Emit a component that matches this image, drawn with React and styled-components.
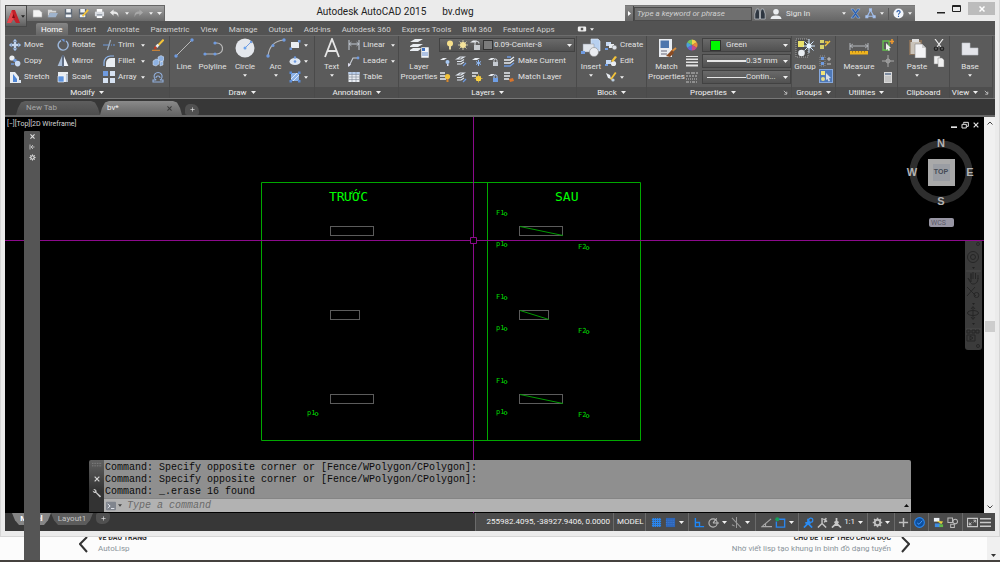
import React from "react";
import styled, { createGlobalStyle, ThemeProvider } from "styled-components";

const theme = {
  ui: `Roboto, "Open Sans", sans-serif`,
  mono: `"Liberation Mono", "DejaVu Sans Mono", monospace`,
  cad: `"DejaVu Sans Mono", "Liberation Mono", monospace`,
  text: "#e2e2e2",
  frame: "#ebebeb",
  panel: "#5b5b5b",
  dark: "#373737",
};

const GlobalStyle = createGlobalStyle`
  * { box-sizing: border-box; }
  body { margin: 0; background: #fcfcfc; }
  button, input, select {
    font: inherit;
    color: inherit;
    background: none;
    border: 0;
    padding: 0;
    margin: 0;
    outline: 0;
  }
  svg { display: block; flex: none; }
`;

const Screen = styled.div`
  position: relative;
  display: flex;
  flex-direction: column;
  min-height: 100vh;
  overflow: hidden;
  font: 8px/10px ${({ theme }) => theme.ui};
  color: ${({ theme }) => theme.text};
`;

const Window = styled.main`
  flex: 1;
  display: flex;
  flex-direction: column;
  position: relative;
  padding: 0 5px 5px;
  background: ${({ theme }) => theme.frame};
  border-bottom: 1px solid #d6d6d6;
  box-shadow: inset 1px 0 #d6d6d6, inset -1px 0 #d6d6d6;
`;

/* title bar */

const TitleBar = styled.header`
  display: flex;
  height: 21px;
  padding-top: 5px;
`;

const AppButton = styled.button`
  position: absolute;
  z-index: 2;
  left: 5px;
  top: 5px;
  width: 22px;
  height: 22px;
  display: flex;
  align-items: center;
  justify-content: space-around;
  background: linear-gradient(#b5b5b5, #5e5e5e);
  border: 1px solid #484848;
`;

const QuickAccess = styled.div`
  display: flex;
  align-items: center;
  justify-content: space-between;
  width: 160px;
  padding: 0 2px 0 26px;
  background: linear-gradient(#a2a2a2, #6b6b6b);
  border: 1px solid #666;
  border-bottom: 0;
`;

const Title = styled.h1`
  flex: 1;
  display: flex;
  justify-content: center;
  gap: 16px;
  margin: 0;
  font-size: 10px;
  font-weight: 400;
  line-height: 14px;
  color: #222;
`;

const InfoCenter = styled.div`
  display: flex;
  align-items: center;
  width: 290px;
  background: linear-gradient(#858585, #666);
  border-top: 1px solid #777;
`;

const InfoArrow = styled.button`
  width: 9px;
  height: 100%;
  display: flex;
  align-items: center;
  justify-content: center;
  border-right: 1px solid #444;
`;

const Search = styled.input`
  width: 118px;
  height: 14px;
  padding-left: 2px;
  background: #6f6f6f;
  border: 1px solid #4a4a4a;
  font-style: italic;
  &::placeholder { color: #cfcfcf; opacity: 1; }
`;

const InfoItems = styled.div`
  flex: 1;
  display: flex;
  align-items: center;
  gap: 4px;
  padding: 0 3px 0 2px;
`;

const SignIn = styled.button`
  flex: 1;
  display: flex;
  align-items: center;
  justify-content: space-between;
`;

const Divider = styled.span`
  width: 1px;
  height: 12px;
  background: #5a5a5a;
`;

const Caption = styled.div`
  display: flex;
  gap: 7px;
  width: 80px;
  margin-top: -3px;
  padding-left: 22px;
`;

const CaptionButton = styled.button`
  display: flex;
  align-items: center;
  justify-content: center;
  width: ${({ $close }) => ($close ? 30 : 9)}px;
  height: 13px;
  background: ${({ $close }) => ($close ? "#bcbcbc" : "none")};
`;

/* ribbon */

const RibbonTabs = styled.nav`
  display: flex;
  align-items: flex-end;
  height: 14px;
  padding-left: 31px;
  background: #535353;
`;

const RibbonTab = styled.button`
  height: 12px;
  padding: 0 5px 0 ${({ $active }) => ($active ? 5 : 6)}px;
  margin-right: ${({ $active }) => ($active ? 2 : 0)}px;
  line-height: 11px;
  white-space: nowrap;
  color: ${({ $active }) => ($active ? "#fff" : "#d0d0d0")};
  background: ${({ $active }) => ($active ? "linear-gradient(#858585, #666)" : "none")};
  border-radius: 2px 2px 0 0;
`;

const TabExtra = styled.button`
  display: flex;
  align-items: center;
  gap: 3px;
  height: 12px;
  padding-left: 17px;
`;

const Ribbon = styled.section`
  display: flex;
  height: 64px;
  background: ${({ theme }) => theme.panel};
  border-top: 1px solid #6c6c6c;
  border-bottom: 1px solid #777;
`;

const PanelBox = styled.section`
  display: flex;
  flex-direction: column;
  width: ${({ $w }) => $w}px;
  border-right: 1px solid #4a4a4a;
`;

const PanelBody = styled.div`
  flex: 1;
  display: flex;
  align-items: flex-start;
  gap: ${({ $gap }) => $gap || 0}px;
  padding: 1px 0 0 ${({ $pad }) => $pad}px;
`;

const PanelTitle = styled.button`
  display: flex;
  align-items: center;
  justify-content: center;
  gap: 4px;
  height: 11px;
  color: #f0f0f0;
  background: #4e4e4e;
`;

const Launcher = styled.span`
  margin-left: auto;
  padding-right: 3px;
`;

const TitleText = styled.span`
  display: flex;
  align-items: center;
  gap: 4px;
  margin-left: ${({ $launcher }) => ($launcher ? "auto" : 0)};
`;

const Column = styled.div`
  display: flex;
  flex-direction: column;
  width: ${({ $w }) => ($w ? `${$w}px` : "auto")};
`;

const Line = styled.div`
  display: flex;
  align-items: center;
  gap: 4px;
  height: 16px;
`;

const Tool = styled.button`
  display: flex;
  align-items: center;
  gap: 3px;
  height: 16px;
  white-space: nowrap;
`;

const ToolText = styled.span`
  flex: ${({ $w }) => ($w ? "none" : "auto")};
  width: ${({ $w }) => ($w ? `${$w}px` : "auto")};
  text-align: left;
`;

const Toggle = styled(Tool)`
  justify-content: center;
  width: 14px;
  height: 14px;
  background: #4f79b8;
  border: 1px solid #86a8dd;
`;

const BigTool = styled.button`
  display: flex;
  flex-direction: column;
  align-items: center;
  width: ${({ $w }) => $w}px;
  padding-top: 1px;
`;

const BigLabel = styled.span`
  margin: 4px 0 2px;
  white-space: pre;
  line-height: 10px;
`;

const Combo = styled.label`
  display: flex;
  align-items: center;
  gap: ${({ $gap }) => $gap || 0}px;
  width: ${({ $w }) => $w}px;
  height: 14px;
  padding: 0 2px 0 ${({ $pad }) => $pad || 4}px;
  background: linear-gradient(#6a6a6a, #515151);
  border: 1px solid #424242;
`;

const Select = styled.select`
  flex: 1;
  min-width: 0;
  appearance: none;
  line-height: 10px;
  text-overflow: ellipsis;
`;

const Swatch = styled.span`
  width: ${({ $size }) => $size}px;
  height: ${({ $size }) => $size}px;
  background: ${({ $color }) => $color};
  border: 1px solid #333;
`;

const Rule = styled.span`
  width: 39px;
  height: ${({ $h }) => $h}px;
  background: #e6e6e6;
`;

/* file tabs */

const FileTabs = styled.nav`
  display: flex;
  align-items: flex-end;
  height: 18px;
  padding-left: 11px;
  background: ${({ theme }) => theme.dark};
  border-bottom: 2px solid #666;
`;

const FileTab = styled.button`
  display: flex;
  align-items: center;
  justify-content: space-between;
  width: ${({ $w }) => $w}px;
  height: 14px;
  padding: 0 9px 0 ${({ $active }) => ($active ? 7 : 10)}px;
  color: ${({ $active }) => ($active ? "#f4f4f4" : "#a8a8a8")};
  background: ${({ $active }) =>
    $active ? "linear-gradient(#8a8a8a, #666)" : "linear-gradient(#5e5e5e, #4c4c4c)"};
  clip-path: polygon(0 100%, 2px 50%, 5px 10%, 9px 0, calc(100% - 9px) 0, calc(100% - 5px) 10%, calc(100% - 2px) 50%, 100% 100%);
`;

const CloseMark = styled.span`
  color: #3c3c3c;
`;

const AddTab = styled.button`
  display: flex;
  align-items: center;
  justify-content: center;
  width: 14px;
  height: 11px;
  margin-left: 3px;
  background: #505050;
  border-radius: ${({ $bottom }) => ($bottom ? "2px 2px 7px 5px" : "5px 7px 2px 2px")};
`;

/* drawing area */

const Workspace = styled.section`
  flex: 1;
  display: flex;
`;

const Canvas = styled.div`
  flex: 1;
  position: relative;
  overflow: hidden;
  background: #000;
`;

const Model = styled.svg`
  position: absolute;
  inset: 0;
  width: 100%;
  height: 100%;
  font-family: ${({ theme }) => theme.cad};
`;

const ViewLabel = styled.div`
  position: relative;
  padding: 3px 2px;
  font-size: 7px;
  line-height: 8px;
  color: #d8d8d8;
`;

const DocButtons = styled.div`
  position: absolute;
  top: 4px;
  right: 4px;
  display: flex;
  gap: 3px;
`;

const Compass = styled.svg`
  position: absolute;
  top: 18px;
  right: 6px;
`;

const Wcs = styled.button`
  position: absolute;
  top: 101px;
  right: 30px;
  width: 25px;
  height: 9px;
  padding-left: 2px;
  font-size: 7px;
  line-height: 8px;
  text-align: left;
  color: #5a5865;
  background: #9896a4;
  border-radius: 2px;
`;

const NavBar = styled.div`
  position: absolute;
  top: 124px;
  right: 2px;
  width: 17px;
  height: 109px;
  background: #3b3b3b;
  border-radius: 0 0 3px 3px;
`;

const Scrollbar = styled.div`
  display: flex;
  flex-direction: column;
  align-items: center;
  justify-content: space-between;
  width: 11px;
  padding: 4px 0;
  background: #f0f0f0;
`;

const Thumb = styled.span`
  width: 10px;
  height: 11px;
  margin-top: 22px;
  background: #cdcdcd;
`;

const Command = styled.section`
  position: absolute;
  left: 84px;
  right: 73px;
  bottom: 1px;
  display: flex;
  border-radius: 2px 2px 0 0;
  overflow: hidden;
  font: 10px/12px ${({ theme }) => theme.mono};
  color: #0a0a0a;
`;

const CommandGrip = styled.div`
  display: flex;
  flex-direction: column;
  align-items: center;
  gap: 5px;
  width: 15px;
  color: #d4d4d4;
  background: linear-gradient(#606060, #333 60%);
`;

const CommandMain = styled.div`
  flex: 1;
`;

const History = styled.div`
  padding: 2px 0 0 1px;
  background: #8f8f8f;
  white-space: nowrap;
`;

const CommandRow = styled.label`
  display: flex;
  align-items: center;
  gap: 2px;
  height: 14px;
  padding: 0 2px;
  background: #b2b2b2;
  border-top: 1px solid #858585;
`;

const CommandInput = styled.input`
  flex: 1;
  margin-left: 3px;
  font-style: italic;
  &::placeholder { color: #6a6a6a; opacity: 1; }
`;

/* status bar */

const StatusBar = styled.footer`
  display: flex;
  height: 18px;
  background: ${({ theme }) => theme.dark};
`;

const LayoutTabs = styled.nav`
  flex: 1;
  display: flex;
  padding-left: 7px;
`;

const LayoutTab = styled.button`
  width: ${({ $w }) => $w}px;
  height: 12px;
  font-weight: ${({ $active }) => ($active ? 700 : 400)};
  color: ${({ $active }) => ($active ? "#fff" : "#c4c4c4")};
  background: ${({ $active }) => ($active ? "#858585" : "#5c5c5c")};
  clip-path: polygon(0 0, 100% 0, calc(100% - 3px) 60%, calc(100% - 7px) 100%, 7px 100%, 3px 60%);
`;

const StatusGroup = styled.div`
  display: flex;
  align-items: center;
  justify-content: ${({ $end }) => ($end ? "flex-end" : "space-around")};
  width: ${({ $w }) => $w}px;
  padding: 0 3px;
  color: #f2f2f2;
  white-space: nowrap;
  background: #4b4b4b;
  border-left: 1px solid #6a6a6a;
`;

const IconButton = styled.button`
  display: flex;
  color: ${({ $muted }) => ($muted ? "#c0c0c0" : "inherit")};
`;

/* page behind the window */

const PageStrip = styled.footer`
  display: flex;
  height: 25px;
  overflow: hidden;
  background: #fcfcfc;
  border-bottom: 2px solid #45423f;
`;

const Pager = styled.div`
  flex: 1;
  display: flex;
  justify-content: space-between;
  padding: 0 77px 0 79px;
`;

const PagerLink = styled.a`
  display: flex;
  gap: 10px;
  text-align: ${({ $right }) => ($right ? "right" : "left")};
  text-decoration: none;
  color: #8a949b;
`;

const PagerText = styled.span`
  display: flex;
  flex-direction: column;
  margin-top: -4px;
  line-height: 11px;
`;

const PagerTitle = styled.strong`
  font-size: 7px;
  line-height: 10px;
  color: #333;
`;

const PageScroll = styled.div`
  display: flex;
  align-items: flex-end;
  justify-content: center;
  width: 13px;
  padding-bottom: 3px;
  background: #f0f0f0;
`;

const Palette = styled.aside`
  position: absolute;
  z-index: 3;
  left: 24px;
  top: 131px;
  bottom: 2px;
  width: 16px;
  display: flex;
  flex-direction: column;
  align-items: center;
  gap: 4px;
  padding-top: 2px;
  background: #555;
  border-radius: 1px 1px 0 0;
`;

/* icons */

const B = "#6f9be0";
const W = "#e9edf2";
const Y = "#f3c33a";

const small = {
  move: (
    <g fill="#b9d0ee" stroke="#7da7e0" strokeWidth=".4">
      <path d="M6 0l2 2.6H4zM6 12l2-2.6H4zM0 6l2.6-2v4zM12 6L9.4 4v4z" />
      <path d="M5 3h2v6H5zM3 5h6v2H3z" fill={W} />
    </g>
  ),
  rotate: (
    <g fill="none">
      <path d="M4 1.6A5 5 0 1 0 9 2" stroke="#9db9de" strokeWidth="1.4" />
      <path d="M4 .2h3.5v3z" fill={B} />
    </g>
  ),
  trim: (
    <g fill="none">
      <path d="M0 6h12" stroke={B} strokeWidth="1.2" strokeDasharray="7 1 1 1" />
      <path d="M7.5 1L4.5 11" stroke="#9ab" strokeWidth="1.2" />
    </g>
  ),
  erase: (
    <g>
      <path d="M11.6.6L6 6.5" stroke={Y} strokeWidth="2" />
      <path d="M6.4 5.6L4 8.4" stroke={W} strokeWidth="2.4" />
      <path d="M4.2 7.6L2.4 10" stroke="#c23b22" strokeWidth="2.2" />
      <path d="M0 11.3h8" stroke="#e08c30" />
    </g>
  ),
  copy: (
    <g>
      <circle cx="3" cy="3" r="2.6" fill={W} />
      <circle cx="6" cy="5.5" r="1.8" fill={B} />
      <circle cx="8.6" cy="8.6" r="2.8" fill="#c9daf2" />
      <path d="M2 9h3" stroke={B} strokeWidth="1.4" />
    </g>
  ),
  mirror: (
    <g>
      <path d="M5 1v10H.6z" fill="#a9bdd8" />
      <path d="M7 1v10h4.4z" fill="#f0f4fa" />
      <path d="M6 0v12" stroke={B} strokeWidth=".6" />
    </g>
  ),
  fillet: (
    <g>
      <path d="M3 12V8a5 5 0 0 1 5-5h4v9z" fill={W} />
      <path d="M1 11V7.5A6.5 6.5 0 0 1 7.5 1H11" fill="none" stroke="#8db4ea" strokeWidth="1.2" />
    </g>
  ),
  explode: (
    <g fill="#8fb2e2" stroke="#dbe7f7" strokeWidth=".5">
      <path d="M1 6l3-2 3 1v4l-3 2-3-1z" />
      <path d="M6 2l3-1.5L12 2v3L9 7 6 5zM8 7l3-1v4l-3 1z" />
    </g>
  ),
  stretch: (
    <g>
      <path d="M1 1h5l4 5v6H1z" fill={W} />
      <path d="M4 11V3l4 5v3z" fill="#4f86d6" />
      <path d="M9 9h3v3H9z" fill="#dce6f3" />
    </g>
  ),
  scale: (
    <g>
      <path d="M1 1h10v2.500H9V11H1z" fill={W} />
      <path d="M1 5h6v6H1z" fill="#5d93de" stroke="#fff" strokeWidth=".6" />
      <path d="M9 3.500h2V11H9z" fill="#b9c6d8" />
    </g>
  ),
  array: (
    <g>
      <path d="M0 0h5v5H0z" fill={B} />
      <path d="M7 0h5v5H7zM0 7h5v5H0zM7 7h5v5H7z" fill="#d7e3f3" />
    </g>
  ),
  offset: (
    <g fill="none" stroke="#92b0dd" strokeWidth="1.1">
      <path d="M1 11V9h3.2A4 4 0 1 1 8 9h3v2z" />
      <path d="M4 7a2 2 0 1 1 4 0" />
    </g>
  ),
  rect: (
    <g>
      <path d="M2 3h8v6H2z" fill={W} />
      <path d="M9 1h2.5v2.5H9zM.5 8.5H3V11H.5z" fill={B} />
    </g>
  ),
  ellipse: (
    <g>
      <ellipse cx="6" cy="6.5" rx="5.5" ry="3.6" fill="#dfe8f4" />
      <circle cx="6" cy="6.5" r="1.3" fill={B} />
      <circle cx="6" cy="2.5" r="1.2" fill={B} />
    </g>
  ),
  hatch: (
    <g>
      <path d="M2 2h8v8H2z" fill="#8db2e6" />
      <path d="M2 8l6-6M4 10l6-6" stroke="#dbe7f7" />
      <path d="M.5.5h2.5v2.5H.5zM9 .5h2.5v2.5H9zM.5 9h2.5v2.5H.5zM9 9h2.5v2.5H9z" fill="#5d8cd4" />
    </g>
  ),
  linear: (
    <g stroke="#c4ccd6" fill="none">
      <path d="M1 1v10M11 1v10M1 5h10" />
      <path d="M3.500 3L1 5l2.500 2M8.500 3L11 5 8.500 7" strokeWidth=".7" />
    </g>
  ),
  leader: (
    <g fill="none">
      <path d="M1 11l4-8h6" stroke="#c9ced6" strokeWidth="1.100" />
      <path d="M0 12V8l3 1.500z" fill="#dde" />
      <circle cx="10" cy="3" r="1.400" fill={B} />
    </g>
  ),
  table: (
    <g>
      <path d="M.5 1h11v10H.5z" fill={W} />
      <path d="M.5 1h11v2.500H.5z" fill="#b7cdec" />
      <path d="M.5 3.500h11M.5 6h11M.5 8.500h11M4 1v10M8 1v10" stroke="#7d8793" strokeWidth=".6" />
    </g>
  ),
  bulb: (
    <g>
      <circle cx="6" cy="4.500" r="3" fill="#f7e08a" />
      <path d="M5 7h2v3.500H5z" fill="#e5d9a4" />
    </g>
  ),
  sun: (
    <g>
      <path d="M6 1v10M1 6h10M2.500 2.500l7 7M9.500 2.500l-7 7" stroke="#c9c4a0" />
      <circle cx="6" cy="6" r="3" fill="#f5e39a" />
    </g>
  ),
  unlock: (
    <g>
      <path d="M0 3.500l3-2h4l-2 2z" fill={W} />
      <path d="M5 6V4.500a2 2 0 0 1 4 0" fill="none" stroke="#d4d8dc" strokeWidth="1.100" />
      <path d="M4 6h6v5H4z" fill="#c8ccd0" />
    </g>
  ),
  sheet: (
    <g>
      <path d="M1 5l3-2h4l-3 2z" fill={W} />
      <circle cx="8.500" cy="7" r="2" fill="#a8c8f2" />
      <path d="M8 9h1.500v2H8z" fill="#dde" />
    </g>
  ),
  sheets: (
    <g stroke="#dfe6ef" strokeWidth="1.200" fill="none">
      <path d="M2 4l3-2h4L6 4zM2 6.500h4l3-2M2 9h4l3-2" />
      <path d="M8 11l3-3" stroke={B} />
    </g>
  ),
  freeze: (
    <g>
      <path d="M1 5l3-2h5L6 5z" fill={W} />
      <path d="M7.500 5v6M5 6.500l5 3M10 6.500l-5 3" stroke="#8fb9f5" />
    </g>
  ),
  lock: (
    <g>
      <path d="M1 5l3-2h4L5 5z" fill={W} />
      <path d="M6 7h5v4H6z" fill="#c6cbd2" />
      <path d="M7 7V5.500a1.500 1.500 0 0 1 3 0V7" fill="none" stroke="#d8dce2" />
    </g>
  ),
  lockBlue: (
    <g>
      <path d="M1 5l3-2h4L5 5z" fill={W} />
      <path d="M6 7h5v4H6z" fill="#6f9fe6" />
      <path d="M7 7V5.500a1.500 1.500 0 0 1 3 0V7" fill="none" stroke="#b7cff2" />
    </g>
  ),
  makeCurrent: (
    <g strokeWidth="1.300" fill="none">
      <path d="M1 5h6l4-3M1 8h6l4-3" stroke={W} />
      <path d="M1 11h6l4-3M4 2h4" stroke={B} />
    </g>
  ),
  layerSun: (
    <g>
      <path d="M1 2h5M1 5h5M1 8h6" stroke={W} strokeWidth="1.500" />
      <circle cx="8.500" cy="5.500" r="2.600" fill={Y} />
      <path d="M7.500 8h2v3h-2z" fill="#d6882e" />
    </g>
  ),
  thaw: (
    <g>
      <path d="M1 2h6M1 5h4" stroke={W} strokeWidth="1.500" />
      <circle cx="7.500" cy="7.500" r="2.600" fill="#ffe04d" />
      <path d="M7.500 3.500v8M3.500 7.500h8M5 5l5 5M10 5l-5 5" stroke={Y} strokeWidth=".7" />
    </g>
  ),
  matchLayer: (
    <g>
      <path d="M1 2h6M1 5h6M1 8h5" stroke={W} strokeWidth="1.500" />
      <path d="M6 8l4-1 1 3-4 1z" fill="#d9752c" />
    </g>
  ),
  create: (
    <g>
      <path d="M1 3h5v4H1z" fill="#c5d8f3" />
      <path d="M4 5h5v4H4z" fill={W} />
      <circle cx="9.500" cy="8.500" r="2.300" fill="#dfe3ea" stroke="#777" strokeWidth=".5" />
      <path d="M0 9h3v2H0z" fill={B} />
    </g>
  ),
  edit: (
    <g>
      <path d="M1 5h5v4H1z" fill="#c5d8f3" />
      <circle cx="8.500" cy="8.500" r="2.600" fill={W} />
      <path d="M6 6l4-5 2 1-4 5z" fill={Y} />
      <path d="M0 9h3v2H0z" fill={B} />
    </g>
  ),
  attr: (
    <g>
      <path d="M1 2l4 2 1 4-3-1z" fill={W} />
      <path d="M5 8l5-7 1.500 1-5 7z" fill={Y} />
      <circle cx="8" cy="9" r="1.600" fill="#bcd" />
    </g>
  ),
  wheel: (
    <g>
      <path d="M6 6V.5A5.500 5.500 0 0 1 10.800 3.300z" fill="#f2d14a" />
      <path d="M6 6l4.800-2.700a5.500 5.500 0 0 1 0 5.400z" fill="#e98a3a" />
      <path d="M6 6l4.800 2.700A5.500 5.500 0 0 1 6 11.500z" fill="#c74a8a" />
      <path d="M6 6v5.500a5.500 5.500 0 0 1-4.800-2.800z" fill="#6a62d2" />
      <path d="M6 6L1.200 8.700a5.500 5.500 0 0 1 0-5.400z" fill="#4aa3d8" />
      <path d="M6 6L1.200 3.300A5.500 5.500 0 0 1 6 .5z" fill="#76c45a" />
    </g>
  ),
  weights: (
    <g fill="#e4e4e4">
      <path d="M0 1h12v1H0zM0 3.500h12V5H0zM0 6.500h12v1.500H0zM0 9.500h12v2H0z" />
    </g>
  ),
  types: (
    <g stroke="#cfcfcf" strokeWidth=".9">
      <path d="M0 2h12" strokeDasharray="4 1" />
      <path d="M0 5h12" strokeDasharray="2 1" />
      <path d="M0 8h12" strokeDasharray="1 1" />
      <path d="M0 11h12" strokeDasharray="3 1 1 1" />
    </g>
  ),
  ungroup: (
    <g>
      <path d="M1 1h4v3H1zM1 6h4v4H1z" fill="#d9d26a" />
      <path d="M6 3h3M6 7l5-5" stroke={Y} strokeWidth="1.400" />
    </g>
  ),
  groupEdit: (
    <g>
      <path d="M1 1h5v10H1z" fill="none" stroke="#aaa" strokeWidth=".7" strokeDasharray="1 1" />
      <path d="M2 2h3v3H2zM2 7h3v3H2z" fill={B} />
      <path d="M8 4h4M10 2v4M8 9h4" stroke="#ddd" strokeWidth=".8" />
    </g>
  ),
  groupSel: (
    <g>
      <path d="M1 1h4v4H1z" fill="#f0e37a" />
      <circle cx="3" cy="9" r="2" fill="#e6dd8a" />
      <path d="M6 3l5 5-2 .3 1 2.700-1.500.5-1-2.500L6 10z" fill="#d5dde8" />
    </g>
  ),
  select: (
    <g>
      <path d="M1 2h6v9H1z" fill="none" stroke="#63c04c" strokeWidth="1.400" />
      <path d="M4 4l5 5-2 .2 1 2-1.500.6L5.500 10 4 11z" fill="#eee" />
      <path d="M10 0v5M7.500 2.500h5" stroke="#f09a30" strokeWidth="1.500" />
    </g>
  ),
  point: <path d="M6 0v12M0 6h12M4 6a2 2 0 1 0 4 0 2 2 0 1 0-4 0" stroke="#a9a9a9" fill="none" strokeWidth="1" />,
  calc: (
    <g>
      <path d="M2 1h8v11H2z" fill="#d8d8d8" />
      <path d="M3 2h6v2H3z" fill="#7d8ba0" />
      <path d="M3.500 6h5M3.500 8h5M3.500 10h5" stroke="#888" strokeDasharray="1 1" />
    </g>
  ),
  cut: (
    <g fill="none">
      <path d="M2 0l6 8M10 0L4 8" stroke="#ececec" strokeWidth="1.200" />
      <circle cx="3" cy="9.700" r="1.700" stroke="#222" strokeWidth="1.200" />
      <circle cx="9" cy="9.700" r="1.700" stroke="#222" strokeWidth="1.200" />
    </g>
  ),
  copyclip: (
    <g fill="#f0f0f0" stroke="#8a8a8a" strokeWidth=".5">
      <path d="M1 1h6v8H1z" />
      <path d="M5 3h4l2 2v7H5z" />
    </g>
  ),
  newFile: <path d="M1 2h7l3 3v5H1z" fill="#f4f4f4" stroke="#888" strokeWidth=".5" />,
  open: (
    <g>
      <path d="M1 2h4l1 1h4v2H3L1 10z" fill="#d8d8d8" />
      <path d="M3 5.500h9L9.500 10H1z" fill="#9fb3cc" />
    </g>
  ),
  save: (
    <g>
      <path d="M2 1h8v10H2z" fill="#5b6674" />
      <path d="M3.500 1h5v4h-5zM3 7h6v3H3z" fill="#eef1f5" />
    </g>
  ),
  saveAs: (
    <g>
      <path d="M1 1h8v10H1z" fill="#5b6674" />
      <path d="M2.500 1h5v4h-5zM2 7h6v3H2z" fill="#eef1f5" />
      <path d="M5 9l6-7" stroke={Y} strokeWidth="2" />
    </g>
  ),
  print: (
    <g>
      <path d="M3 1h6v4H3zM3 8h6v3H3z" fill="#fff" />
      <path d="M1 4h10v5H1z" fill="#dadde2" />
      <path d="M3 7.500h6" stroke="#6b7785" />
    </g>
  ),
  undo: <path d="M5 1.500L1 5l4 3.500V6.300c3-.3 4.500.7 5 3.700C11 5.500 9 3.700 5 3.700z" fill="#e9e9e9" />,
  redo: <path d="M7 1.500L11 5 7 8.500V6.300C4 6 2.500 7 2 10 1 5.500 3 3.700 7 3.700z" fill="#a9a9a9" />,
  binoculars: (
    <g fill="#2e3640" stroke="#d8dde3" strokeWidth=".6">
      <path d="M2.500 1h2.200l.8 3v7H.8V6zM7.300 1h2.200l1.700 5v5H6.500V4z" />
    </g>
  ),
  user: (
    <g fill="#eceff2">
      <circle cx="6" cy="3.800" r="2.800" />
      <path d="M.5 11c.5-3 2.500-3.500 5.500-3.500s5 .5 5.500 3.500z" />
    </g>
  ),
  exchange: (
    <g>
      <path d="M1 1l4 5-4 5h3l2-3 2 3h3L7 6l4-5H8L6 4 4 1z" fill="#2b5fae" stroke="#b9d0f3" strokeWidth=".5" />
    </g>
  ),
  a360: (
    <g fill="none" stroke="#9fbbe8" strokeWidth="1.300">
      <path d="M6 2.500L2.500 9h7z" />
      <path d="M5 1h2v2H5zM1 8.500h2v2H1zM9 8.500h2v2H9z" fill="#dce8fa" />
    </g>
  ),
  helpDisc: (
    <g>
      <circle cx="6" cy="6" r="5.500" fill="#f3f6fb" />
      <path d="M4.300 4.700c0-2.600 3.500-2.300 3.500-.3C7.800 5.700 6 5.500 6 7.300M6 8.500v1.200" fill="none" stroke="#2a5cab" strokeWidth="1.200" />
    </g>
  ),
  camera: (
    <g>
      <rect x="1" y="3" width="10" height="6" rx="1.500" fill="#efefef" />
      <path d="M4.500 4.500h3v3h-3z" fill="#555" />
    </g>
  ),
  close: <path d="M2.500 2.500l7 7M9.500 2.500l-7 7" stroke="currentColor" strokeWidth="1.800" />,
  plus: <path d="M6 1v10M1 6h10" stroke="currentColor" strokeWidth="1.600" />,
  min: <path d="M1.500 8h9v2.500h-9z" fill="currentColor" />,
  restore: <path d="M4 2h7v6H9M4 2v2M1.500 5h6.500v5.500H1.500z" stroke="currentColor" strokeWidth="1.500" fill="none" />,
  wrench: (
    <path d="M1.500 1.500a3 3 0 0 1 4 3.500l5.500 5-1.500 1.500-5-5.500A3 3 0 0 1 .8 3L3 4.500 4 3.500z" fill="#c9c9c9" />
  ),
  prompt: (
    <g>
      <rect x="0" y="1" width="12" height="10" rx="1" fill="#80858e" />
      <path d="M2 3.500L5 6 2 8.500M6 9h4" stroke="#e9edf5" fill="none" strokeWidth="1.100" />
    </g>
  ),
  grip: <path d="M0 4h12M0 7h12" stroke="#909090" strokeDasharray="1 1" />,
  pin: <path d="M2 1v10M5 6h6M8 2L4 6l4 4" stroke="#d5d5d5" fill="none" strokeWidth="1.600" />,
  gear: (
    <g>
      <circle cx="6" cy="6" r="3" fill="none" stroke="currentColor" strokeWidth="2" />
      <path d="M6 .8v2M6 9.200v2M.8 6h2M9.200 6h2M2.300 2.300l1.500 1.500M8.200 8.200l1.500 1.500M9.700 2.300L8.200 3.800M3.800 8.200L2.300 9.700" stroke="currentColor" strokeWidth="1.700" />
    </g>
  ),
  grid: <path d="M2.500 1v10M4.800 1v10M7.200 1v10M9.500 1v10M1 2.500h10M1 4.800h10M1 7.200h10M1 9.500h10" stroke="#2a86ee" strokeWidth="1.300" />,
  snap: (
    <g>
      <path d="M1 1h10v10H1z" fill="#2e64b4" />
      <path d="M1 3.500h10M1 6h10M1 8.500h10" stroke="#3f7fdb" strokeDasharray="1 1" />
    </g>
  ),
  ortho: <path d="M1.500 1v9.500H11M1.500 6H6v4.500" stroke="#1f86f5" strokeWidth="1.500" fill="none" />,
  polar: (
    <g fill="none" stroke="#b9b9b9" strokeWidth="1.200">
      <circle cx="5.500" cy="6.500" r="4.500" />
      <path d="M5.500 6.500H12M5.500 6.500l4-5" />
    </g>
  ),
  iso: <path d="M1 1l10 10.500M6 0v12M1 8.500l3 1.500" stroke="#999" strokeWidth="1.100" />,
  track: <path d="M11 2L1 10.500h11M5 7v3" stroke="#aaa" strokeWidth="1.200" fill="none" />,
  osnap: (
    <g>
      <path d="M4 2.500h6.500V11h-9V5" fill="none" stroke="#2a86ee" strokeWidth="1.500" />
      <circle cx="2.500" cy="2.500" r="2.200" fill="#17a05c" />
    </g>
  ),
  annoBlue: (
    <g stroke="#2a8cf5" fill="none">
      <path d="M5.500 2v5L1 11.500M5.500 7L10 11.500M2.500 6.500h6" strokeWidth="1.900" />
      <circle cx="8.500" cy="3.500" r="2.200" strokeWidth="1.300" />
    </g>
  ),
  annoStar: <path d="M5.500 1v6L1 11.500M5.500 7L10 11.500M7 2l4 3M10 1L8 6" stroke="#c2c2c2" strokeWidth="1.600" fill="none" />,
  anno: <path d="M6 1v6L1 11.500M6 7l5 4.500M4 5l2 3 2-3" stroke="#c8c8c8" strokeWidth="1.900" fill="none" />,
  hardware: (
    <g>
      <circle cx="6" cy="6" r="5.300" fill="#0d4f9e" stroke="#2a86ee" strokeWidth="1.200" />
      <path d="M3.500 6.500L5.500 8 9 4" stroke="#4ba0ff" fill="none" />
    </g>
  ),
  isolate: (
    <g>
      <path d="M1 1h6v4H1z" fill="#eef3f8" />
      <path d="M4 4l7 1-2 3z" fill="#e9d23b" />
      <path d="M2 7h6v4H2z" fill="#3f8ce2" />
      <path d="M7 8h4v3H7z" fill="#61b74a" />
    </g>
  ),
  objects: (
    <g fill="none" stroke="#bbb" strokeWidth="1.100">
      <path d="M1 1h5v5H1zM4 8h4v3.500H4z" />
      <circle cx="9" cy="5" r="2.500" />
    </g>
  ),
  clean: (
    <g fill="none" stroke="#c6c6c6">
      <path d="M.5 1.500h11v9H.5z" strokeWidth="1.300" />
      <path d="M7 3.500h2.500V6M9.500 3.500L7 6M5 8.500H2.500V6M2.500 8.500L5 6" />
    </g>
  ),
  menu: <path d="M0 2h12M0 6h12M0 10h12" stroke="#c9c9c9" strokeWidth="1.600" />,
  launcher: <path d="M2 2l6 6M9 4v6H3" stroke="#eee" strokeWidth="1.600" fill="none" />,
};

const large = {
  line: (
    <g>
      <path d="M2 18L18 2" stroke="#b8b8b8" strokeWidth="1" />
      <circle cx="2" cy="18" r="1.700" fill={B} />
      <circle cx="18" cy="2" r="1.700" fill={B} />
    </g>
  ),
  polyline: (
    <g>
      <path d="M2 16h12a5 5 0 0 0 0-11h-2" fill="none" stroke="#b8b8b8" strokeWidth="1.200" />
      <circle cx="2" cy="16" r="1.600" fill={B} />
      <circle cx="12" cy="16" r="1.600" fill={B} />
      <circle cx="12" cy="5" r="1.600" fill={B} />
    </g>
  ),
  circle: (
    <g>
      <circle cx="10" cy="10" r="9.500" fill="#e4e7ec" />
      <path d="M10 10l6-6" stroke={B} />
      <circle cx="10" cy="10" r="1.500" fill="#6ca4ee" />
      <circle cx="16" cy="4" r="1.200" fill={B} />
    </g>
  ),
  arc: (
    <g>
      <path d="M2 18C3 9 8 3 18 2" fill="none" stroke="#b8b8b8" strokeWidth="1.200" />
      <circle cx="2" cy="18" r="1.700" fill={B} />
      <circle cx="7" cy="7.500" r="1.500" fill={B} />
      <circle cx="18" cy="2" r="1.700" fill={B} />
    </g>
  ),
  text: <path d="M3 19L10 1l7 18M5.500 13h9" fill="none" stroke="#e6e6e6" strokeWidth="1.800" />,
  layers: (
    <g>
      <path d="M1 4l5-3h8l-5 3zM1 8l3-2h10l-5 3H1zM1 12l3-2h9l-4 3H1z" fill={W} />
      <path d="M12 9h8v11h-8z" fill="#f3f6fa" stroke="#555" strokeWidth=".5" />
      <path d="M13 10h3v3h-3z" fill="#3d6fc0" />
      <path d="M13 15h6M13 17h6" stroke="#6b8fce" />
    </g>
  ),
  insert: (
    <g>
      <path d="M10 1h7l2 2v10h-9z" fill="#b8d0ef" stroke="#e8f0fb" strokeWidth=".6" />
      <path d="M2 6h11v8H2z" fill="#dfe4eb" stroke="#8b939e" strokeWidth=".5" />
      <circle cx="13" cy="14" r="4.500" fill="#eceef2" stroke="#888" strokeWidth=".6" />
      <path d="M0 13h4v3H0z" fill={B} />
    </g>
  ),
  match: (
    <g>
      <path d="M2 1h13v18H2z" fill={W} />
      <path d="M3.500 2.500H12V10H3.500z" fill="#4c76ad" />
      <path d="M4 13h6M4 16h6" stroke="#667" strokeWidth="1.200" />
      <path d="M19 10l-5 4" stroke="#d98c3a" strokeWidth="2" />
      <path d="M15 12l2 3-4 4-4-1z" fill="#8a4b22" />
    </g>
  ),
  group: (
    <g>
      <path d="M1 1h12v18H1z" fill="#4c4c4c" stroke="#c5c5c5" strokeWidth=".7" strokeDasharray="1 1" />
      <path d="M3 3h6v6H3z" fill="#e9e06a" />
      <circle cx="6.500" cy="15" r="3.300" fill={W} />
      <path d="M14 1v14M8 8h12M9.500 3.500l9 9M18.500 3.500l-9 9" stroke="#cfe6ff" strokeWidth="1" />
      <circle cx="14" cy="8" r="2.500" fill="#e6f3ff" />
    </g>
  ),
  measure: (
    <g>
      <path d="M1 5v7M19 5v7M1 8h18" stroke="#b4b8bd" />
      <path d="M4 6L1 8l3 2M16 6l3 2-3 2" fill="none" stroke="#b4b8bd" strokeWidth=".8" />
      <path d="M1 13h18v3.500H1z" fill="#f0b41e" />
      <path d="M3.500 13v1.500M6.500 13v1.500M9.500 13v1.500M12.500 13v1.500M15.500 13v1.500" stroke="#8a6410" strokeWidth=".7" />
    </g>
  ),
  paste: (
    <g>
      <path d="M2 2h13v15H2z" fill="#87705a" />
      <path d="M3.500 4h10v12h-10z" fill="#c9c2b8" />
      <path d="M5 1h7v3H5z" fill="#ddd" />
      <path d="M8 6h7l4 4v10H8z" fill="#f3f3f5" stroke="#888" strokeWidth=".6" />
      <path d="M15 6v4h4" fill="#ccc" />
    </g>
  ),
  base: <path d="M2 5h8v5h8v7H2z" fill="#e4e5ea" stroke="#c1c3ca" strokeWidth=".6" />,
};

const Icon = ({ name, size = 12 }) => (
  <svg width={size} height={size} viewBox="0 0 12 12" aria-hidden="true">
    {small[name]}
  </svg>
);

const LargeIcon = ({ name }) => (
  <svg width="20" height="20" viewBox="0 0 20 20" aria-hidden="true">
    {large[name]}
  </svg>
);

const Arrow = ({ size = 5, color = "#f0f0f0" }) => (
  <svg width={size} height="3" viewBox="0 0 5 3" aria-hidden="true">
    <path d="M0 0h5L2.500 3z" fill={color} />
  </svg>
);

const Logo = () => (
  <svg width="13" height="13" viewBox="0 0 13 13" aria-hidden="true">
    <path d="M5 0h3l5 13H9L6.500 9 4 13H0z" fill="#c3202a" />
    <path d="M5 0l1.500 9L4 13H0z" fill="#e5484d" />
    <path d="M6.500 4L8 8H5z" fill="#7d0d15" />
  </svg>
);

const Panel = ({ title, w, pad, gap, menu = true, launcher, children }) => (
  <PanelBox $w={w}>
    <PanelBody $pad={pad} $gap={gap}>
      {children}
    </PanelBody>
    <PanelTitle>
      <TitleText $launcher={launcher}>
        {title}
        {menu && <Arrow />}
      </TitleText>
      {launcher && (
        <Launcher>
          <Icon name="launcher" size={5} />
        </Launcher>
      )}
    </PanelTitle>
  </PanelBox>
);

const Big = ({ icon, label, w, menu }) => (
  <BigTool $w={w}>
    <LargeIcon name={icon} />
    <BigLabel>{label}</BigLabel>
    {menu && <Arrow size={4} />}
  </BigTool>
);

const Row = ({ icon, label, textWidth, menu }) => (
  <Tool aria-label={label || icon}>
    <Icon name={icon} />
    {label && <ToolText $w={textWidth}>{label}</ToolText>}
    {menu && <Arrow size={4} />}
  </Tool>
);

const tabs = [
  "Home", "Insert", "Annotate", "Parametric", "View", "Manage", "Output",
  "Add-ins", "Autodesk 360", "Express Tools", "BIM 360", "Featured Apps",
];

const Mark = ({ x, y, children }) => (
  <g>
    <text x={x} y={y} fontSize="7" fill="#00dc00">{children}</text>
    <circle cx={x + 9.500} cy={y - 1} r="1.500" fill="none" stroke="#00c400" />
  </g>
);

const rows = [
  { y: 226, w: 43 },
  { y: 310, w: 29 },
  { y: 394, w: 43 },
];

const Drawing = () => (
  <Model>
    <g transform="translate(-5 -117)">
      <path d="M261.500 182.500h379v258h-379zM487.500 182.500v258" fill="none" stroke="#00a800" />
      <text x="329" y="201" fontSize="13" fill="#00ff00">TRƯỚC</text>
      <text x="555" y="201" fontSize="13" fill="#00ff00">SAU</text>
      {rows.map(({ y, w }) => (
        <g key={y} fill="none">
          <rect x="330.500" y={y + 0.5} width={w} height="9" stroke="#5c5c5c" />
          <rect x="519.500" y={y + 0.5} width={w} height="9" stroke="#5c5c5c" />
          <path d={`M520 ${y + 0.5}l${w} 9`} stroke="#009a00" />
          <Mark x={496} y={y - 11}>F1</Mark>
          <Mark x={496} y={y + 20}>p1</Mark>
          <Mark x={578} y={y + 23}>F2</Mark>
        </g>
      ))}
      <Mark x={307} y={415}>p1</Mark>
      <path d="M0 240.500h470M477 240.500h4000M473.500 0v237M473.500 244v3000M470.500 237.500h6v6h-6z" fill="none" stroke="#8c0a8c" />
    </g>
  </Model>
);

const ViewCube = () => (
  <Compass width="74" height="74" viewBox="0 0 74 74">
    <circle cx="37" cy="37" r="28" fill="none" stroke="#2e2e2e" strokeWidth="7" />
    <path d="M24 24h27v27H24z" fill="#a9a9a9" />
    <path d="M29 29h17v17H29z" fill="#9a9da3" />
    <g fontFamily="Liberation Sans, sans-serif" fontWeight="700" textAnchor="middle">
      <text x="37" y="39" fontSize="7" fill="#444a55">TOP</text>
      <g fontSize="11" fill="#b4b4b4">
        <text x="37" y="12">N</text>
        <text x="37" y="70">S</text>
        <text x="8" y="41">W</text>
        <text x="66" y="41">E</text>
      </g>
    </g>
  </Compass>
);

const NavIcons = () => (
  <svg width="17" height="109" viewBox="0 0 17 109" fill="none" stroke="#262626">
    <circle cx="13" cy="3" r="1.500" />
    <circle cx="8" cy="16" r="5.500" />
    <circle cx="8" cy="16" r="2.500" />
    <path d="M7 26h3l-1.500 2zM7 62h3l-1.500 2zM7 82h3l-1.500 2z" fill="#222" stroke="none" />
    <path d="M1 30h15M1 88h15" stroke="#4a4a4a" />
    <path d="M3 37l3 4V33M6 38v-6M8 38v-7M10.500 38v-6M13 38v-4M13 37c0 5-3 6-5 6s-3-2-5-6" />
    <path d="M2 46l9 9M10 46l-8 9" />
    <circle cx="11.500" cy="54" r="2.500" />
    <path d="M8 66v12M6 68l2-2.500L10 68M6 76l2 2.500 2-2.500" />
    <ellipse cx="8" cy="72" rx="5.500" ry="2.500" />
    <path d="M2 89h3v3H2zM7 89h3v3H7zM11 89h3v3h-3zM2 94h8v6H2zM5 95l3 2-3 2z" />
    <circle cx="13" cy="105" r="1.500" />
  </svg>
);

const Chevron = ({ right }) => (
  <svg width="9" height="16" viewBox="0 0 9 16" aria-hidden="true">
    <path d={right ? "M1 0l7 7-7 8" : "M8 0L1 7l7 8"} fill="none" stroke="#333" strokeWidth="2" />
  </svg>
);

const StatusIcon = ({ name }) => (
  <IconButton $muted aria-label={name}>
    <Icon name={name} size={11} />
  </IconButton>
);

export default function App() {
  return (
    <ThemeProvider theme={theme}>
      <GlobalStyle />
      <Screen>
        <Window>
          <AppButton aria-label="Application menu">
            <Logo />
            <Arrow size={4} color="#222" />
          </AppButton>
          <TitleBar>
            <QuickAccess>
              {["newFile", "open", "save", "saveAs", "print", "undo"].map((name) => (
                <IconButton key={name} aria-label={name}>
                  <Icon name={name} size={11} />
                </IconButton>
              ))}
              <Arrow size={4} />
              <IconButton aria-label="redo">
                <Icon name="redo" size={11} />
              </IconButton>
              <Arrow size={4} />
              <Arrow />
            </QuickAccess>
            <Title>
              <span>Autodesk AutoCAD 2015</span>
              <span>bv.dwg</span>
            </Title>
            <InfoCenter>
              <InfoArrow aria-label="Collapse search">
                <svg width="3" height="5" viewBox="0 0 3 5">
                  <path d="M0 0l3 2.500L0 5z" fill="#fff" />
                </svg>
              </InfoArrow>
              <Search aria-label="Search" placeholder="Type a keyword or phrase" />
              <InfoItems>
                <IconButton aria-label="Find">
                  <Icon name="binoculars" />
                </IconButton>
                <Icon name="user" />
                <SignIn>
                  Sign In
                  <Arrow size={4} />
                </SignIn>
                <Icon name="exchange" size={11} />
                <Icon name="a360" size={11} />
                <Arrow size={4} />
                <Divider />
                <Icon name="helpDisc" size={11} />
                <Arrow size={4} />
              </InfoItems>
            </InfoCenter>
            <Caption>
              <CaptionButton aria-label="Minimize">
                <svg width="8" height="10" viewBox="0 0 8 10">
                  <path d="M0 8h8v1.500H0z" fill="#222" />
                </svg>
              </CaptionButton>
              <CaptionButton aria-label="Maximize">
                <svg width="9" height="7" viewBox="0 0 9 7">
                  <path d="M.5.5h8v6h-8zM.5 1.500h8" fill="none" stroke="#222" />
                </svg>
              </CaptionButton>
              <CaptionButton $close aria-label="Close">
                <svg width="6" height="6" viewBox="0 0 6 6">
                  <path d="M.5.5l5 5M5.500.5l-5 5" stroke="#fff" strokeWidth="1.500" />
                </svg>
              </CaptionButton>
            </Caption>
          </TitleBar>

          <RibbonTabs>
            {tabs.map((tab) => (
              <RibbonTab key={tab} $active={tab === "Home"}>{tab}</RibbonTab>
            ))}
            <TabExtra aria-label="Ribbon display">
              <Icon name="camera" size={10} />
              <Arrow size={4} />
            </TabExtra>
          </RibbonTabs>

          <Ribbon>
            <Panel title="Modify" w={165} pad={4}>
              <Column $w={48}>
                <Row icon="move" label="Move" />
                <Row icon="copy" label="Copy" />
                <Row icon="stretch" label="Stretch" />
              </Column>
              <Column $w={46}>
                <Row icon="rotate" label="Rotate" />
                <Row icon="mirror" label="Mirror" />
                <Row icon="scale" label="Scale" />
              </Column>
              <Column $w={49}>
                <Row icon="trim" label="Trim" textWidth={20} menu />
                <Row icon="fillet" label="Fillet" textWidth={20} menu />
                <Row icon="array" label="Array" textWidth={20} menu />
              </Column>
              <Column>
                <Row icon="erase" />
                <Row icon="explode" />
                <Row icon="offset" />
              </Column>
            </Panel>
            <Panel title="Draw" w={145} pad={1}>
              <Big icon="line" label="Line" w={26} />
              <Big icon="polyline" label="Polyline" w={31} />
              <Big icon="circle" label="Circle" w={34} menu />
              <Big icon="arc" label="Arc" w={27} menu />
              <Column>
                <Row icon="rect" menu />
                <Row icon="ellipse" menu />
                <Row icon="hatch" menu />
              </Column>
            </Panel>
            <Panel title="Annotation" w={84} pad={3} gap={3}>
              <Big icon="text" label="Text" w={27} menu />
              <Column>
                <Row icon="linear" label="Linear" textWidth={25} menu />
                <Row icon="leader" label="Leader" textWidth={25} menu />
                <Row icon="table" label="Table" />
              </Column>
            </Panel>
            <Panel title="Layers" w={178} pad={1} gap={1}>
              <Big icon="layers" label={"Layer\nProperties"} w={38} />
              <Column>
                <Line>
                  <Combo $w={136} $gap={1}>
                    <Icon name="bulb" />
                    <Icon name="sun" />
                    <Icon name="unlock" />
                    <Swatch $size={10} $color="#7b7b7b" />
                    <Select aria-label="Layer">
                      <option>0.09-Center-8</option>
                    </Select>
                    <Arrow />
                  </Combo>
                </Line>
                <Line>
                  <Row icon="sheet" />
                  <Row icon="sheets" />
                  <Row icon="freeze" />
                  <Row icon="lock" />
                  <Row icon="makeCurrent" label="Make Current" />
                </Line>
                <Line>
                  <Row icon="layerSun" />
                  <Row icon="sheets" />
                  <Row icon="thaw" />
                  <Row icon="lockBlue" />
                  <Row icon="matchLayer" label="Match Layer" />
                </Line>
              </Column>
            </Panel>
            <Panel title="Block" w={70} pad={1} gap={1}>
              <Big icon="insert" label="Insert" w={26} menu />
              <Column>
                <Row icon="create" label="Create" />
                <Row icon="edit" label="Edit" />
                <Row icon="attr" menu />
              </Column>
            </Panel>
            <Panel title="Properties" w={145} pad={1} gap={1} launcher>
              <Big icon="match" label={"Match\nProperties"} w={39} />
              <Column>
                <Line>
                  <Icon name="wheel" />
                  <Combo as="div" $w={89} $pad={7} $gap={5}>
                    <Swatch $size={11} $color="#00f800" />
                    <Select aria-label="Color">
                      <option>Green</option>
                    </Select>
                    <Arrow />
                  </Combo>
                </Line>
                <Line>
                  <Icon name="weights" />
                  <Combo as="div" $w={89}>
                    <Rule $h={2} />
                    <Select aria-label="Lineweight">
                      <option>0.35 mm</option>
                    </Select>
                    <Arrow />
                  </Combo>
                </Line>
                <Line>
                  <Icon name="types" />
                  <Combo as="div" $w={89}>
                    <Rule $h={1} />
                    <Select aria-label="Linetype">
                      <option>Contin...</option>
                    </Select>
                    <Arrow />
                  </Combo>
                </Line>
              </Column>
            </Panel>
            <Panel title="Groups" w={44} pad={1} gap={2}>
              <Big icon="group" label="Group" w={24} />
              <Column>
                <Row icon="ungroup" />
                <Row icon="groupEdit" />
                <Toggle aria-label="Group selection">
                  <Icon name="groupSel" />
                </Toggle>
              </Column>
            </Panel>
            <Panel title="Utilities" w={62} pad={6} gap={6}>
              <Big icon="measure" label="Measure" w={34} menu />
              <Column>
                <Row icon="select" />
                <Row icon="point" />
                <Row icon="calc" />
              </Column>
            </Panel>
            <Panel title="Clipboard" w={52} pad={7} gap={4} menu={false}>
              <Big icon="paste" label="Paste" w={24} menu />
              <Column>
                <Row icon="cut" />
                <Row icon="copyclip" />
              </Column>
            </Panel>
            <Panel title="View" w={43} pad={6} launcher>
              <Big icon="base" label="Base" w={28} menu />
            </Panel>
          </Ribbon>

          <FileTabs>
            <FileTab $w={84}>New Tab</FileTab>
            <FileTab $w={82} $active>
              bv*
              <CloseMark>
                <Icon name="close" size={7} />
              </CloseMark>
            </FileTab>
            <AddTab aria-label="New drawing">
              <Icon name="plus" size={5} />
            </AddTab>
          </FileTabs>

          <Workspace>
            <Canvas>
              <Drawing />
              <ViewLabel>[−][Top][2D Wireframe]</ViewLabel>
              <DocButtons>
                {["min", "restore", "close"].map((name) => (
                  <IconButton key={name} aria-label={name}>
                    <Icon name={name} size={8} />
                  </IconButton>
                ))}
              </DocButtons>
              <ViewCube />
              <Wcs>WCS</Wcs>
              <NavBar>
                <NavIcons />
              </NavBar>
              <Command>
                <CommandGrip>
                  <Icon name="grip" size={10} />
                  <Icon name="close" size={8} />
                  <Icon name="wrench" size={10} />
                </CommandGrip>
                <CommandMain>
                  <History>
                    <div>Command: Specify opposite corner or [Fence/WPolygon/CPolygon]:</div>
                    <div>Command: Specify opposite corner or [Fence/WPolygon/CPolygon]:</div>
                    <div>Command: _.erase 16 found</div>
                  </History>
                  <CommandRow>
                    <Icon name="prompt" size={10} />
                    <Arrow size={4} color="#444" />
                    <CommandInput placeholder="Type a command" aria-label="Command" />
                    <svg width="5" height="3" viewBox="0 0 5 3">
                      <path d="M0 3h5L2.500 0z" fill="#111" />
                    </svg>
                  </CommandRow>
                </CommandMain>
              </Command>
            </Canvas>
            <Scrollbar>
              <svg width="6" height="4" viewBox="0 0 6 4">
                <path d="M.5 3.500L3 1l2.500 2.500" fill="none" stroke="#444" />
              </svg>
              <Thumb />
              <svg width="6" height="4" viewBox="0 0 6 4">
                <path d="M.5.5L3 3 5.500.5" fill="none" stroke="#444" />
              </svg>
            </Scrollbar>
          </Workspace>

          <StatusBar>
            <LayoutTabs>
              <LayoutTab $w={39} $active>Model</LayoutTab>
              <LayoutTab $w={42}>Layout1</LayoutTab>
              <AddTab $bottom aria-label="New layout">
                <Icon name="plus" size={5} />
              </AddTab>
            </LayoutTabs>
            <StatusGroup $w={138} $end>255982.4095, -38927.9406, 0.0000</StatusGroup>
            <StatusGroup $w={32}>MODEL</StatusGroup>
            <StatusGroup $w={43}>
              <StatusIcon name="grid" />
              <StatusIcon name="snap" />
              <Arrow />
            </StatusGroup>
            <StatusGroup $w={67}>
              <StatusIcon name="ortho" />
              <StatusIcon name="polar" />
              <Arrow />
              <StatusIcon name="iso" />
              <Arrow />
            </StatusGroup>
            <StatusGroup $w={43}>
              <StatusIcon name="track" />
              <StatusIcon name="osnap" />
              <Arrow />
            </StatusGroup>
            <StatusGroup $w={69}>
              <StatusIcon name="annoBlue" />
              <StatusIcon name="annoStar" />
              <StatusIcon name="anno" />
              <span>1:1</span>
              <Arrow />
            </StatusGroup>
            <StatusGroup $w={27}>
              <StatusIcon name="gear" />
              <Arrow />
            </StatusGroup>
            <StatusGroup $w={16}>
              <StatusIcon name="plus" />
            </StatusGroup>
            <StatusGroup $w={18}>
              <StatusIcon name="hardware" />
            </StatusGroup>
            <StatusGroup $w={34}>
              <StatusIcon name="isolate" />
              <StatusIcon name="objects" />
            </StatusGroup>
            <StatusGroup $w={33}>
              <StatusIcon name="clean" />
              <StatusIcon name="menu" />
            </StatusGroup>
          </StatusBar>
        </Window>

        <PageStrip>
          <Pager>
            <PagerLink href="#top">
              <Chevron />
              <PagerText>
                <PagerTitle>VỀ ĐẦU TRANG</PagerTitle>
                AutoLisp
              </PagerText>
            </PagerLink>
            <PagerLink href="#next" $right>
              <PagerText>
                <PagerTitle>CHỦ ĐỀ TIẾP THEO CHƯA ĐỌC</PagerTitle>
                Nhờ viết lisp tạo khung in bình đồ dạng tuyến
              </PagerText>
              <Chevron right />
            </PagerLink>
          </Pager>
          <PageScroll>
            <Arrow color="#333" />
          </PageScroll>
        </PageStrip>

        <Palette>
          <Icon name="close" size={7} />
          <Icon name="pin" size={6} />
          <Icon name="gear" size={7} />
        </Palette>
      </Screen>
    </ThemeProvider>
  );
}
